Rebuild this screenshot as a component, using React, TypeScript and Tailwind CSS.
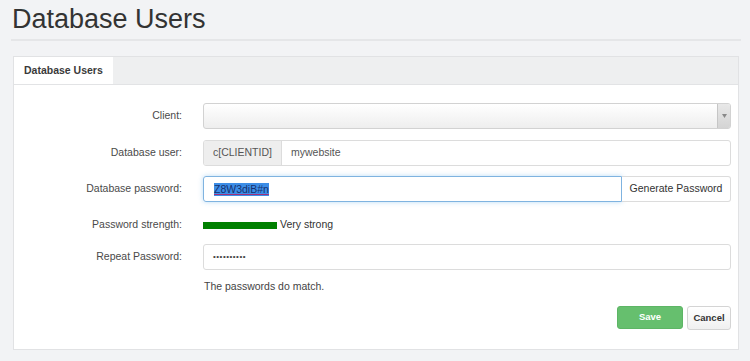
import React from 'react';

const font = { fontFamily: '"Liberation Sans", Arial, sans-serif' };

const Label: React.FC<{ children: React.ReactNode }> = ({ children }) => (
  <div className="w-[168px] shrink-0 text-right text-[10.5px] text-[#4a4a4a]">{children}</div>
);

export default function App() {
  return (
    <div className="min-h-[361px] bg-[#f2f3f5] pl-[11px] pr-[9px] pt-[4px]" style={font}>
      {/* PAGE TITLE */}
      <div className="border-b-2 border-[#e5e6e8] pb-[5px]">
        <h1 className="text-[27px] leading-[30px] text-[#333] pl-[1px]">Database Users</h1>
      </div>

      {/* PANEL */}
      <div className="mx-[2px] mt-[15px] border border-[#e1e2e4] bg-white">
        {/* TABS */}
        <div className="flex h-[28px] bg-[#eeeff0] border-b border-[#e2e3e5]">
          <div className="w-[99px] bg-white flex items-center pl-[10px] text-[10.5px] font-bold text-[#3a3a3a]">
            Database Users
          </div>
        </div>

        {/* FORM */}
        <div className="pt-[18px] pb-[19px] pr-[7px]">
          <div className="flex items-center h-[26px]">
            <Label>Client:</Label>
            <div className="ml-[21px] flex-1 h-full flex rounded-[3px] border border-[#d2d2d2] bg-gradient-to-b from-white to-[#eeeeee] overflow-hidden">
              <div className="flex-1" />
              <div className="w-[13px] h-full border-l border-[#c6c6c6] bg-gradient-to-b from-[#e8e8e8] to-[#d4d4d4] flex items-center justify-center">
                <svg width="5" height="4" viewBox="0 0 5 4"><path d="M0 0h5L2.5 4z" fill="#888" /></svg>
              </div>
            </div>
          </div>

          <div className="flex items-center h-[26px] mt-[11px]">
            <Label>Database user:</Label>
            <div className="ml-[21px] flex-1 h-full flex rounded-[3px] border border-[#dcdcdc] overflow-hidden text-[10.5px]">
              <div className="w-[78px] bg-[#eeeeee] border-r border-[#dcdcdc] flex items-center justify-center text-[#555]">c[CLIENTID]</div>
              <div className="flex-1 flex items-center pl-[9px] text-[#555]">mywebsite</div>
            </div>
          </div>

          <div className="flex items-center h-[26px] mt-[10px]">
            <Label>Database password:</Label>
            <div className="ml-[21px] flex-1 h-full flex text-[10.5px]">
              <div className="flex-1 flex items-center pl-[10px] rounded-l-[3px] border border-[#7fb3e0] shadow-[0_0_5px_rgba(102,175,233,0.45)]">
                <span className="bg-[#3c8de6] text-[#17306e] leading-[13px] underline decoration-[#a0307a]">Z8W3diB#n</span>
              </div>
              <div className="w-[109px] flex items-center justify-center rounded-r-[3px] border border-l-0 border-[#dcdcdc] bg-white text-[#333]">
                Generate Password
              </div>
            </div>
          </div>

          <div className="flex items-center h-[20px] mt-[13px]">
            <Label>Password strength:</Label>
            <div className="ml-[21px] flex items-center">
              <div className="w-[74px] h-[7px] bg-[#008000]" />
              <span className="ml-[3px] text-[10.5px] text-[#333]">Very strong</span>
            </div>
          </div>

          <div className="flex items-center h-[26px] mt-[9px]">
            <Label>Repeat Password:</Label>
            <div className="ml-[21px] flex-1 h-full flex items-center pl-[9px] rounded-[3px] border border-[#dcdcdc]">
              <span className="text-[8px] tracking-[0.5px] text-[#444]">••••••••••</span>
            </div>
          </div>

          <div className="flex items-center h-[20px] mt-[7px]">
            <div className="w-[168px] shrink-0" />
            <div className="ml-[22px] text-[10.5px] text-[#444]">The passwords do match.</div>
          </div>

          <div className="flex justify-end gap-[4px] mt-[9px]">
            <div className="w-[66px] h-[23px] flex items-center justify-center rounded-[3px] bg-[#66bf6e] border border-[#5db565] text-white text-[9.5px] font-bold">
              Save
            </div>
            <div className="w-[44px] h-[24px] flex items-center justify-center rounded-[3px] bg-gradient-to-b from-white to-[#f0f0f0] border border-[#d4d4d4] text-[#333] text-[9.5px] font-bold">
              Cancel
            </div>
          </div>
        </div>
      </div>
    </div>
  );
}
